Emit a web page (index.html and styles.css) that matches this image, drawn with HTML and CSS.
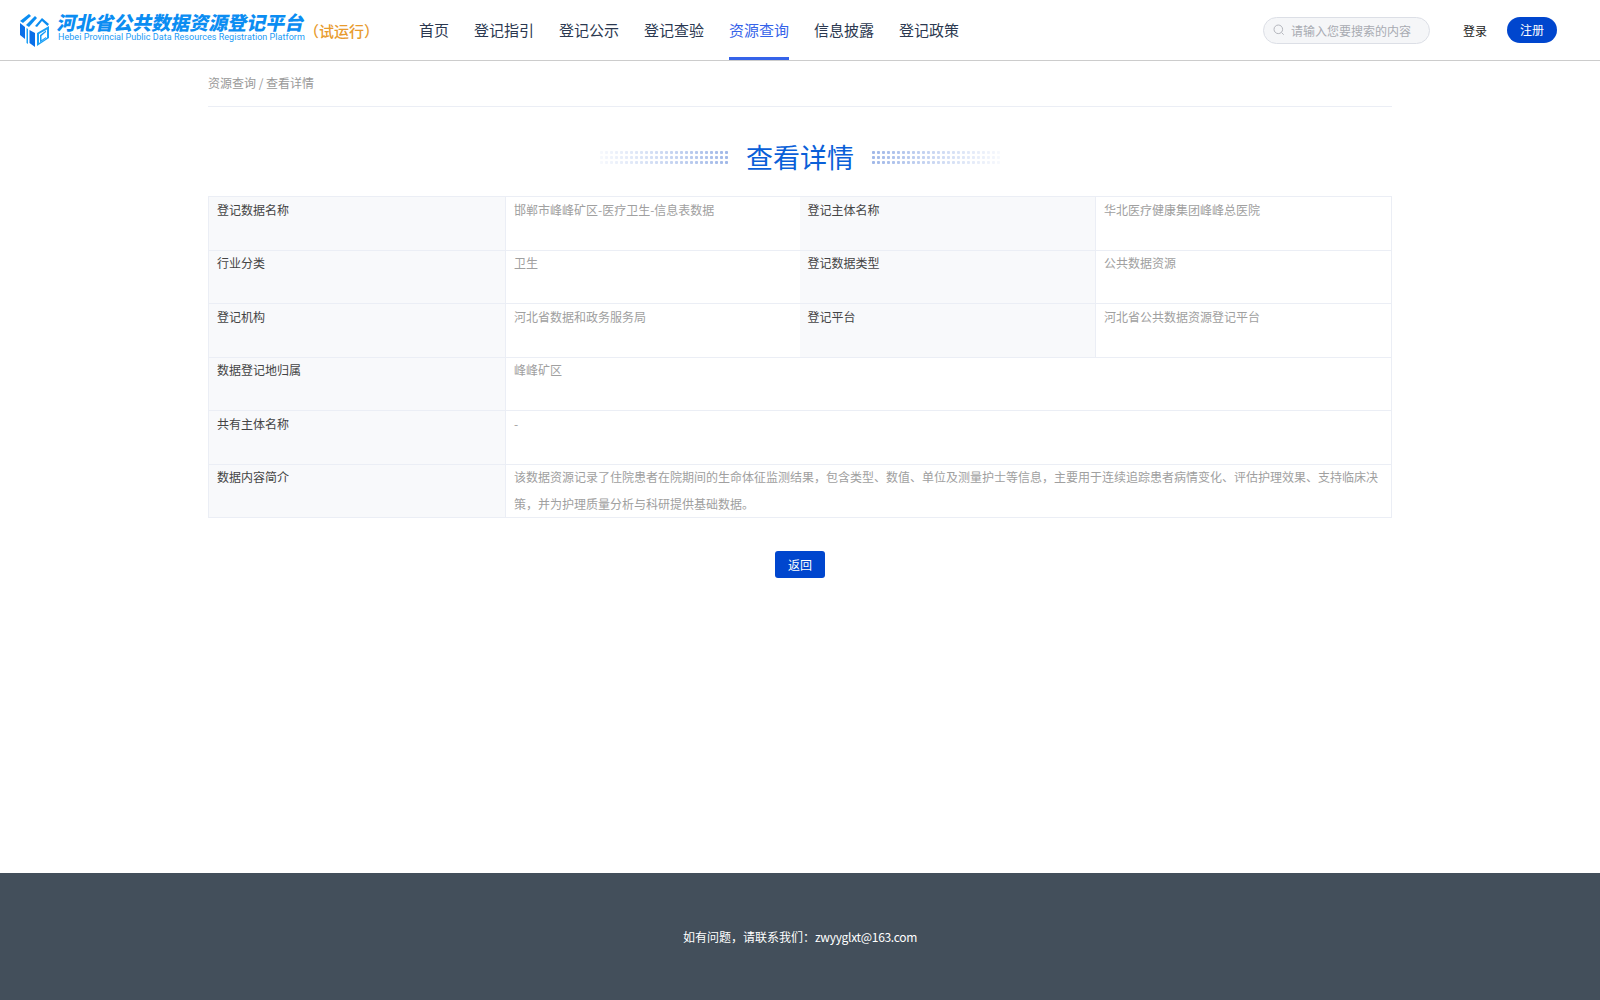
FILE: index.html
```html
<!DOCTYPE html>
<html lang="zh-CN">
<head>
    <meta charset="UTF-8">
    <title>河北省公共数据资源登记平台</title>
    <link rel="stylesheet" href="styles.css">
</head>
<body>
    <!-- top bar -->
    <header class="top-bar">
        <a class="logo" href="#">
            <svg class="logo-icon" viewBox="0 0 30 34" width="30" height="34">
                <path fill="#0b8df2" d="M0 8l9-7 2 2-8 7z"/>
                <path fill="#0b6fe8" d="M0 10l5 4v12l-5-4z"/>
                <path fill="#0b8df2" d="M6 12l9-9 2 2-8 9z"/>
                <path fill="#1aa0f7" d="M6.500 15L8 16v15l-1.500-1z"/>
                <path fill="#0b8df2" d="M15 13l7-8 7 6-1.500 2-5.500-5-5 6z"/>
                <path fill="#0b6fe8" d="M9.500 17l5.500 3v14l-5.500-4z"/>
                <path fill="#1aa0f7" fill-rule="evenodd" d="M17 20l12-7v12l-12 8zM19 21v9l8-5.500V16.500zM20 22l6-4.500V19l-4.500 4v4l4.500-3v1.500L20 29.500z"/>
            </svg>
            <span class="logo-text">
                <span class="logo-cn">河北省公共数据资源登记平台</span>
                <span class="logo-en">Hebei Provincial Public Data Resources Registration Platform</span>
            </span>
            <span class="logo-tag">（试运行）</span>
        </a>
        <nav class="main-nav">
            <a href="#">首页</a>
            <a href="#">登记指引</a>
            <a href="#">登记公示</a>
            <a href="#">登记查验</a>
            <a href="#" class="active">资源查询</a>
            <a href="#">信息披露</a>
            <a href="#">登记政策</a>
        </nav>
        <div class="search-box">
            <svg viewBox="0 0 14 14" width="12" height="12">
                <circle cx="6.200" cy="6.200" r="5" fill="none" stroke="#a8abb2" stroke-width="1"/>
                <path d="M10 10l2.500 2.500" stroke="#a8abb2" stroke-width="1"/>
            </svg>
            <span>请输入您要搜索的内容</span>
        </div>
        <a class="login-link" href="#">登录</a>
        <a class="register-btn" href="#">注册</a>
    </header>

    <!-- page content -->
    <main class="page-content">
        <div class="breadcrumb">资源查询 / 查看详情</div>

        <div class="title-row">
            <span class="dots dots-left"></span>
            <h2>查看详情</h2>
            <span class="dots dots-right"></span>
        </div>

        <table class="detail-table">
            <colgroup>
                <col class="col-first"><col class="col-value"><col class="col-rest"><col class="col-rest">
            </colgroup>
            <tr>
                <th>登记数据名称</th>
                <td class="no-right">邯郸市峰峰矿区-医疗卫生-信息表数据</td>
                <th class="no-left">登记主体名称</th>
                <td>华北医疗健康集团峰峰总医院</td>
            </tr>
            <tr>
                <th>行业分类</th>
                <td class="no-right">卫生</td>
                <th class="no-left">登记数据类型</th>
                <td>公共数据资源</td>
            </tr>
            <tr>
                <th>登记机构</th>
                <td class="no-right">河北省数据和政务服务局</td>
                <th class="no-left">登记平台</th>
                <td>河北省公共数据资源登记平台</td>
            </tr>
            <tr>
                <th>数据登记地归属</th>
                <td colspan="3">峰峰矿区</td>
            </tr>
            <tr>
                <th>共有主体名称</th>
                <td colspan="3">-</td>
            </tr>
            <tr>
                <th>数据内容简介</th>
                <td colspan="3">该数据资源记录了住院患者在院期间的生命体征监测结果，包含类型、数值、单位及测量护士等信息，主要用于连续追踪患者病情变化、评估护理效果、支持临床决策，并为护理质量分析与科研提供基础数据。</td>
            </tr>
        </table>

        <div class="actions">
            <button class="back-btn">返回</button>
        </div>
    </main>

    <footer class="site-footer">如有问题，请联系我们：<span class="footer-mail">zwyyglxt@163.com</span></footer>
</body>
</html>
```

FILE: styles.css
```css
* {
    margin: 0;
    padding: 0;
    box-sizing: border-box;
}

body {
    font-family: "Noto Sans CJK SC", "Noto Sans", sans-serif;
    background-color: #fff;
    color: #333;
    height: 1000px;
    display: flex;
    flex-direction: column;
    overflow: hidden;
}

a {
    text-decoration: none;
}

/* top bar */
.top-bar {
    height: 61px;
    flex: none;
    display: flex;
    align-items: center;
    padding-left: 20px;
    border-bottom: 1px solid #ccc;
}

.logo {
    width: 399px;
    flex: none;
    display: flex;
    align-items: center;
}

.logo-icon {
    flex: none;
    margin-right: 8px;
}

.logo-text {
    display: flex;
    flex-direction: column;
    width: 246px;
    margin-bottom: 5px;
}

.logo-cn {
    font-size: 19px;
    line-height: 20px;
    font-weight: 900;
    color: #0b8df2;
    transform: skewX(-12deg);
    white-space: nowrap;
}

.logo-en {
    font-family: "Roboto", sans-serif;
    font-size: 9px;
    line-height: 11px;
    color: #1a9af5;
    white-space: nowrap;
    letter-spacing: 0.04px;
}

.logo-tag {
    font-size: 15px;
    font-weight: 500;
    color: #e89b2e;
    white-space: nowrap;
}

.main-nav {
    display: flex;
    gap: 25px;
    height: 60px;
}

.main-nav a {
    font-size: 15px;
    line-height: 60px;
    color: #2b3850;
    border-bottom: 3px solid transparent;
}

.main-nav a.active {
    color: #3563e9;
    border-bottom-color: #3563e9;
}

.search-box {
    margin-left: auto;
    width: 167px;
    height: 27px;
    display: flex;
    align-items: center;
    gap: 6px;
    padding-left: 9px;
    background-color: #f5f6f8;
    border: 1px solid #dcdfe6;
    border-radius: 14px;
    font-size: 12px;
    color: #a8abb2;
}

.login-link {
    margin-left: 33px;
    font-size: 12px;
    color: #222;
}

.register-btn {
    margin-left: 20px;
    margin-right: 43px;
    width: 50px;
    height: 26px;
    line-height: 26px;
    text-align: center;
    font-size: 12px;
    color: #fff;
    background-color: #0046ce;
    border-radius: 13px;
}

/* page content */
.page-content {
    flex: 1;
    width: 1184px;
    margin: 0 auto;
}

.breadcrumb {
    height: 46px;
    line-height: 44px;
    font-size: 12px;
    color: #999;
    border-bottom: 1px solid #ebeef5;
}

.title-row {
    display: flex;
    justify-content: center;
    align-items: center;
    gap: 17px;
    height: 89px;
    padding-top: 11px;
}

.title-row h2 {
    font-size: 27px;
    line-height: 40px;
    font-weight: 400;
    color: #0a5fd8;
}

.dots {
    width: 130px;
    height: 15px;
    background-image: radial-gradient(circle, #9fb7e8 1.300px, transparent 1.800px);
    background-size: 5px 5px;
}

.dots-left {
    -webkit-mask-image: linear-gradient(to left, #000 0, rgba(0, 0, 0, 0.08) 100%);
    mask-image: linear-gradient(to left, #000 0, rgba(0, 0, 0, 0.08) 100%);
}

.dots-right {
    -webkit-mask-image: linear-gradient(to right, #000 0, rgba(0, 0, 0, 0.08) 100%);
    mask-image: linear-gradient(to right, #000 0, rgba(0, 0, 0, 0.08) 100%);
}

.detail-table {
    width: 1183px;
    table-layout: fixed;
    border-collapse: collapse;
    font-size: 12px;
    line-height: 26.500px;
}

.col-first {
    width: 297px;
}

.col-value {
    width: 294px;
}

.col-rest {
    width: 296px;
}

.detail-table tr {
    height: 53.500px;
}

.detail-table th,
.detail-table td {
    border: 1px solid #ebeef5;
    padding: 0 8px;
    text-align: left;
    vertical-align: top;
}

/* text sits a little higher than the line box gives */
.detail-table th::before,
.detail-table td::before {
    content: "";
    display: block;
    margin-top: -0.500px;
}

.detail-table th {
    font-weight: 400;
    color: #444;
    background-color: #f8f9fb;
}

.detail-table td {
    color: #a0a0a0;
}

.detail-table .no-right {
    border-right: none;
}

.detail-table .no-left {
    border-left: none;
}

.actions {
    display: flex;
    justify-content: center;
    margin-top: 33px;
}

.back-btn {
    width: 50px;
    height: 27px;
    border: none;
    border-radius: 3px;
    background-color: #0046ce;
    color: #fff;
    font-family: inherit;
    font-size: 12px;
}

/* footer */
.site-footer {
    flex: none;
    height: 127px;
    padding-top: 54px;
    text-align: center;
    font-size: 12px;
    line-height: 20px;
    color: #fff;
    background-color: #434f5b;
}

.footer-mail {
    letter-spacing: -0.3px;
}
```
